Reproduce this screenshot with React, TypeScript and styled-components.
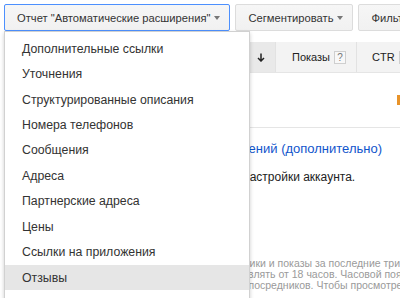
import React from "react";
import styled, { createGlobalStyle } from "styled-components";

const Global = createGlobalStyle`
  html, body { margin: 0; padding: 0; background: #fff; }
  body { font-family: Arial, "Liberation Sans", sans-serif; color: #222; overflow: hidden; }
`;

const Page = styled.div`
  position: relative;
  width: 400px;
  height: 298px;
  overflow: hidden;
`;

const Toolbar = styled.div`
  display: flex;
  gap: 5px;
  padding: 4px 0 0 4px;
  white-space: nowrap;
`;

const Button = styled.div<{ $focused?: boolean }>`
  flex-shrink: 0;
  display: inline-flex;
  align-items: center;
  gap: 4px;
  height: 27px;
  box-sizing: border-box;
  padding: 0 9px 0 12px;
  border: 1px solid ${(p) => (p.$focused ? "#4d90fe" : "#dcdcdc")};
  border-radius: 2px;
  background: linear-gradient(#f6f6f6, #f1f1f1);
  color: #333;
  font-size: 11.2px;
`;

const Caret = styled.span`
  width: 0;
  height: 0;
  border-left: 3.5px solid transparent;
  border-right: 3.5px solid transparent;
  border-top: 4px solid #777;
  margin-top: 1px;
`;

const Table = styled.div`
  margin-top: 11px;
  padding-left: 4px;
`;

const HeaderRow = styled.div`
  display: flex;
  height: 30px;
  background: #f3f3f3;
  border-bottom: 1px solid #e5e5e5;
  white-space: nowrap;
`;

const HeaderCell = styled.div<{ $w: number; $sorted?: boolean; $start?: boolean }>`
  flex: 0 0 ${(p) => p.$w}px;
  box-sizing: border-box;
  display: flex;
  align-items: center;
  justify-content: ${(p) => (p.$start ? "flex-start" : "flex-end")};
  gap: 4px;
  padding: 0 10px 0 ${(p) => (p.$start ? 15 : 10)}px;
  border-left: 1px solid #e2e2e2;
  background: ${(p) => (p.$sorted ? "#e9e9e9" : "transparent")};
  font-size: 11px;
  color: #222;
  &:first-child { border-left: none; }
`;

const Help = styled.span`
  display: inline-flex;
  align-items: center;
  justify-content: center;
  width: 12px;
  height: 13px;
  box-sizing: border-box;
  border: 1px solid #cfcfcf;
  background: #f8f8f8;
  color: #777;
  font-size: 10px;
`;

const SortArrow = styled.svg`
  margin-left: 4px;
`;

const DataRow = styled.div`
  display: flex;
  align-items: center;
  justify-content: flex-end;
  height: 54px;
  border-bottom: 1px solid #e5e5e5;
  overflow: hidden;
`;

const WarnMark = styled.span`
  flex-shrink: 0;
  width: 12px;
  height: 10px;
  margin-right: -9px;
  background: #e8932a;
`;

const Message = styled.div`
  padding-top: 13px;
  white-space: nowrap;
`;

const MoreLink = styled.a<{ $indent: number }>`
  display: block;
  padding-left: ${(p) => p.$indent}px;
  color: #1155cc;
  font-size: 13px;
  line-height: 16px;
  text-decoration: none;
`;

const Hint = styled.div<{ $indent: number }>`
  margin-top: 13px;
  padding-left: ${(p) => p.$indent}px;
  font-size: 12px;
  line-height: 15px;
  color: #222;
`;

const Note = styled.div`
  margin-top: 73px;
  font-size: 10.5px;
  line-height: 11px;
  color: #9a9a9a;
`;

const NoteLine = styled.div<{ $indent: number }>`
  padding-left: ${(p) => p.$indent}px;
`;

const Menu = styled.div`
  position: absolute;
  top: 31px;
  left: 4px;
  width: 246px;
  box-sizing: border-box;
  padding: 4px 0 20px;
  background: #fff;
  border: 1px solid rgba(0, 0, 0, 0.18);
  box-shadow: 0 2px 4px rgba(0, 0, 0, 0.2);
`;

const MenuItem = styled.div<{ $active?: boolean }>`
  display: flex;
  align-items: center;
  height: 25.44px;
  padding-left: 17px;
  font-size: 12.3px;
  color: #333;
  white-space: nowrap;
  background: ${(p) => (p.$active ? "#e6e6e6" : "transparent")};
`;

const items = [
  "Дополнительные ссылки",
  "Уточнения",
  "Структурированные описания",
  "Номера телефонов",
  "Сообщения",
  "Адреса",
  "Партнерские адреса",
  "Цены",
  "Ссылки на приложения",
  "Отзывы",
];

const noteLines = [
  { indent: 62, text: "Обратите внимание: статистика за клики и показы за последние три часа может быть неполной." },
  { indent: 33, text: "Задержка обновления данных может составлять от 18 часов. Часовой пояс аккаунта." },
  { indent: 71, text: "Сюда не входят данные сторонних посредников. Чтобы просмотреть все данные." },
];

export default function App() {
  return (
    <Page>
      <Global />
      <Toolbar>
        <Button $focused>
          Отчет "Автоматические расширения"
          <Caret />
        </Button>
        <Button>
          Сегментировать
          <Caret />
        </Button>
        <Button>
          Фильтр
          <Caret />
        </Button>
      </Toolbar>
      <Table>
        <HeaderRow>
          <HeaderCell $w={271} $sorted>
            Автоматическое расширение <Help>?</Help>
            <SortArrow width="8" height="9" viewBox="0 0 8 9">
              <path d="M4 0.5V8M1 5L4 8L7 5" stroke="#222" strokeWidth="1.5" fill="none" />
            </SortArrow>
          </HeaderCell>
          <HeaderCell $w={81}>
            Показы <Help>?</Help>
          </HeaderCell>
          <HeaderCell $w={62} $start>
            CTR <Help>?</Help>
          </HeaderCell>
        </HeaderRow>
        <DataRow>
          <WarnMark />
        </DataRow>
        <Message>
          <MoreLink href="#" $indent={48}>
            Подробнее о статистике расширений (дополнительно)
          </MoreLink>
          <Hint $indent={48}>Чтобы увидеть данные, измените настройки аккаунта.</Hint>
          <Note>
            {noteLines.map((l) => (
              <NoteLine key={l.indent} $indent={l.indent}>
                {l.text}
              </NoteLine>
            ))}
          </Note>
        </Message>
      </Table>
      <Menu>
        {items.map((t, i) => (
          <MenuItem key={t} $active={i === items.length - 1}>
            {t}
          </MenuItem>
        ))}
      </Menu>
    </Page>
  );
}
